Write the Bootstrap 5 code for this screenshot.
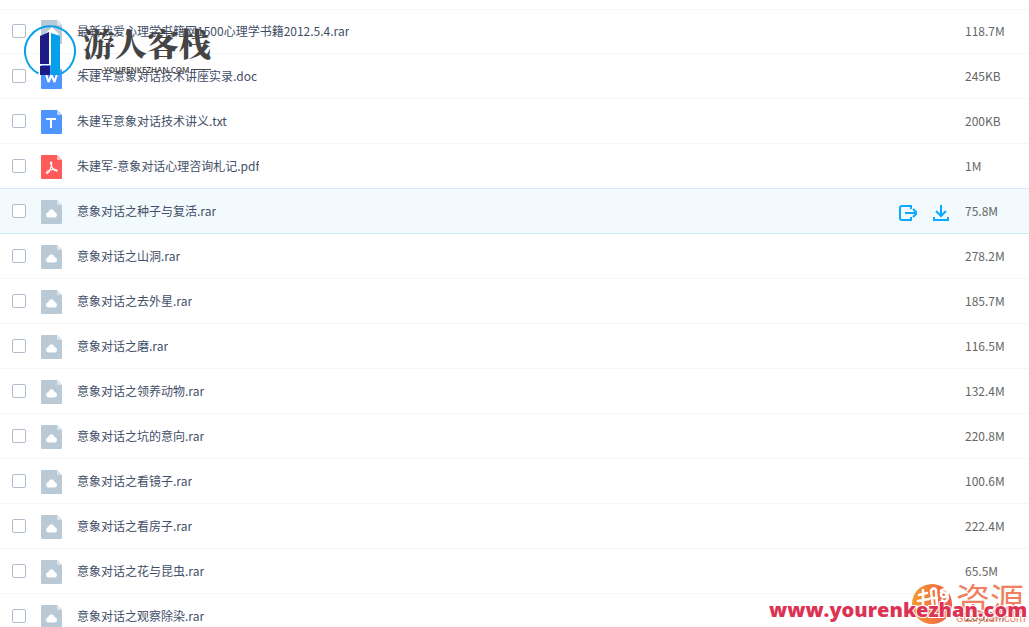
<!DOCTYPE html>
<html lang="zh-CN">
<head>
<meta charset="utf-8">
<meta name="viewport" content="width=device-width, initial-scale=1">
<title>文件列表</title>
<link rel="stylesheet" href="https://cdn.jsdelivr.net/npm/bootstrap@5.3.0/dist/css/bootstrap.min.css">
<style>
body{font-family:"Noto Sans CJK SC",sans-serif;font-size:12px;line-height:18px;color:#424e67;background:#fff}
.page{height:100vh}
.files{table-layout:fixed;--bs-table-bg:transparent}
.files thead th{height:9px;padding:0;border-bottom:1px solid #f2f6fd;font-size:0;line-height:0}
.files tbody td{height:45px;padding:0;border-bottom:1px solid #f2f6fd;color:#424e67}
.files tbody tr:first-child td{height:44px}
.files tbody td.size{color:#666}
.files tr.active td{background:#f2fafe;border-color:#cdeafb}
.files tr.before-active td{border-color:#d5e8f7}
.c-check{width:41px}.c-actions{width:66px}.c-size{width:64px}
.files .form-check-input[type=checkbox]{width:14px;height:14px;margin:0 0 0 12px;border:1px solid #afbcce;border-radius:2px;display:block}
.file-icon{width:21px;height:24px;margin:2px 15px 0 0;flex:none}
.act{line-height:0;border:0;background:none;padding:4px 0 0;color:#09aaff}
.logo-mark{left:23px;top:24px;width:190px;height:54px;pointer-events:none}
.site-mark{right:0;bottom:0;width:260px;height:46px;pointer-events:none}
</style>
</head>
<body>
<svg class="d-none" aria-hidden="true">
<symbol id="rar" viewBox="0 0 21 24"><path fill="#b9c9d6" d="M1 0h15l5 5v18a1 1 0 0 1-1 1H1a1 1 0 0 1-1-1V1a1 1 0 0 1 1-1z"/><path fill="#dce5ec" d="M16 0l5 5h-4a1 1 0 0 1-1-1z"/><path fill="#fff" d="M7.500 17.500a2.700 2.700 0 0 1-.8-5.200c.6-.2 1-.6 1.300-1.600a2.800 2.800 0 0 1 5 0c.3 1 .7 1.400 1.300 1.600a2.700 2.700 0 0 1-.8 5.200z"/></symbol>
<symbol id="doc" viewBox="0 0 21 24"><path fill="#4e95ff" d="M1 0h15l5 5v18a1 1 0 0 1-1 1H1a1 1 0 0 1-1-1V1a1 1 0 0 1 1-1z"/><path fill="#b8d5ff" d="M16 0l5 5h-4a1 1 0 0 1-1-1z"/><path fill="none" stroke="#fff" stroke-width="2" stroke-linejoin="bevel" d="M5 9l2.500 8 3-7 3 7L16 9"/></symbol>
<symbol id="txt" viewBox="0 0 21 24"><path fill="#4e95ff" d="M1 0h15l5 5v18a1 1 0 0 1-1 1H1a1 1 0 0 1-1-1V1a1 1 0 0 1 1-1z"/><path fill="#b8d5ff" d="M16 0l5 5h-4a1 1 0 0 1-1-1z"/><path fill="none" stroke="#fff" stroke-width="2" d="M5 9h10M10 9v9"/></symbol>
<symbol id="pdf" viewBox="0 0 21 24"><path fill="#ff5b5b" d="M1 0h15l5 5v18a1 1 0 0 1-1 1H1a1 1 0 0 1-1-1V1a1 1 0 0 1 1-1z"/><path fill="#ffbdbd" d="M16 0l5 5h-4a1 1 0 0 1-1-1z"/><path fill="none" stroke="#fff" stroke-width="1.200" d="M10 7c-1.500 0 .5 3 1 5 1 2 3 4 4.500 4s0-2-3.500-1.500-6.500 2-6.500 3.200 2 .8 3.500-2.700S11.500 7 10 7z"/></symbol>
</svg>
<main class="page position-relative overflow-hidden">
<table class="table files mb-0 w-100 align-middle">
<colgroup><col class="c-check"><col><col class="c-actions"><col class="c-size"></colgroup>
<thead><tr><th></th><th></th><th></th><th></th></tr></thead>
<tbody id="rows"></tbody>
</table>
<svg class="logo-mark position-absolute" viewBox="0 0 190 54" role="img" aria-label="游人客栈">
<path d="M15.500 49.500A25 25 0 1 1 38.500 49.500" fill="none" stroke="#0aa1e8" stroke-width="2"/>
<path fill="#fff" d="M22 10l7-7 7 7-3 3v20h-8V12z"/>
<path fill="#1d1c86" d="M17 12l9-4v32h-9zM17 42h10v9H17z"/>
<path fill="#fff" d="M17 40h11v1H17zM26 15h2v16h-2z"/>
<path fill="#04a0e9" d="M28 9l9 3v39h-9z"/>
<text x="60" y="32" font-size="32" font-weight="900" fill="#444" font-family="'Noto Serif CJK SC','Noto Sans CJK SC',serif">游人客栈</text>
<text x="81" y="49" font-size="8" font-weight="600" fill="#444" font-family="'Open Sans',sans-serif">YOURENKEZHAN.COM</text>
<path stroke="#444" d="M60 45.500h19M168 45.500h20"/>
</svg>
<svg class="site-mark position-absolute" viewBox="0 0 260 46" role="img" aria-label="www.yourenkezhan.com">
<defs><linearGradient id="og"><stop stop-color="#f39a2d"/><stop offset="1" stop-color="#f15a50"/></linearGradient></defs>
<circle cx="163" cy="23" r="20" fill="url(#og)"/>
<g fill="none" stroke="#fff" stroke-width="2.500" stroke-linecap="round"><path d="M150 14l8-2M154 9v15M149 20l11-2M164 26l-2-16c1-4 6-3 5 1l1 14M162 17h6M172 10c4-4 9 0 6 4-2 3-5 3-6 0s4-4 6 0c3 4-3 9-5 5M148 26h10"/></g>
<text x="187" y="32" font-size="34" fill="#f08060" font-family="'Noto Sans CJK SC',sans-serif">资源</text>
<text x="187" y="41" font-size="11" fill="#f08060" font-family="Roboto,sans-serif">Guziyuan.com</text>
<text x="0" y="36" font-size="20" font-weight="800" fill="#dc3354" stroke="#fff" stroke-width="2" stroke-linejoin="round" paint-order="stroke" font-family="'Open Sans',sans-serif">www.yourenkezhan.com</text>
</svg>
</main>
<script>
const files=[
["rar","最新我爱心理学书籍网1500心理学书籍2012.5.4.rar","118.7M"],
["doc","朱建军意象对话技术讲座实录.doc","245KB"],
["txt","朱建军意象对话技术讲义.txt","200KB"],
["pdf","朱建军-意象对话心理咨询札记.pdf","1M"],
["rar","意象对话之种子与复活.rar","75.8M"],
["rar","意象对话之山洞.rar","278.2M"],
["rar","意象对话之去外星.rar","185.7M"],
["rar","意象对话之磨.rar","116.5M"],
["rar","意象对话之领养动物.rar","132.4M"],
["rar","意象对话之坑的意向.rar","220.8M"],
["rar","意象对话之看镜子.rar","100.6M"],
["rar","意象对话之看房子.rar","222.4M"],
["rar","意象对话之花与昆虫.rar","65.5M"],
["rar","意象对话之观察除染.rar","205.3M"]];
const active=4;
const actions=`<div class="d-flex gap-3"><button class="act" aria-label="分享"><svg width="18" height="18" viewBox="0 0 18 18" fill="none" stroke="currentColor" stroke-width="2"><path d="M12 5V2H3a2 2 0 0 0-2 2v10a2 2 0 0 0 2 2h9v-3M6 9h11M14 5l4 4-4 4"/></svg></button><button class="act" aria-label="下载"><svg width="16" height="18" viewBox="0 0 16 18" fill="none" stroke="currentColor" stroke-width="2"><path d="M8 1v11M3 7l5 5 5-5M1 13v3h14v-3"/></svg></button></div>`;
document.getElementById("rows").innerHTML=files.map(([t,n,s],i)=>`<tr class="${i===active?"active":i===active-1?"before-active":""}"><td><input class="form-check-input" type="checkbox" id="f${i}"></td><td><label class="d-flex align-items-center" for="f${i}"><svg class="file-icon" aria-hidden="true"><use href="#${t}"/></svg><span class="text-truncate">${n}</span></label></td><td>${i===active?actions:""}</td><td class="size">${s}</td></tr>`).join("");
</script>
<script src="https://cdn.jsdelivr.net/npm/bootstrap@5.3.0/dist/js/bootstrap.bundle.min.js"></script>
</body>
</html>
